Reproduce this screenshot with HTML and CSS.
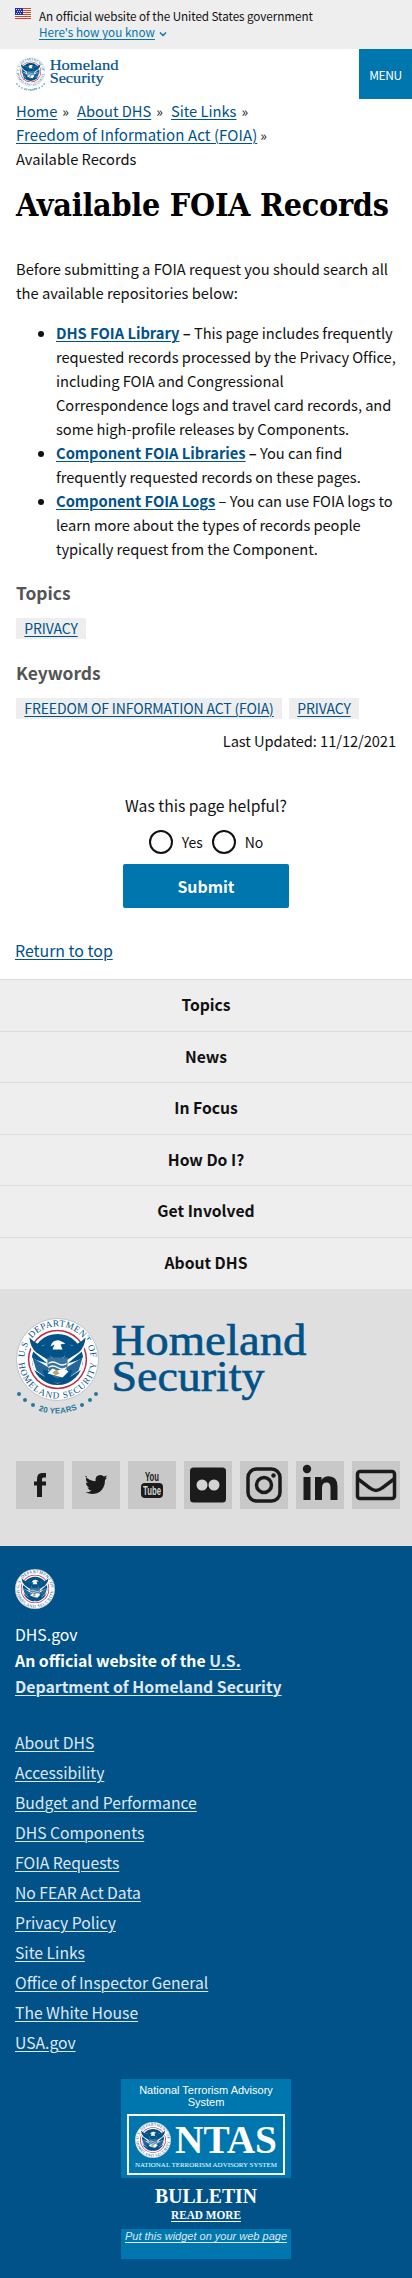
FILE: index.html
```
<!DOCTYPE html>
<html lang="en">
<head>
<meta charset="utf-8">
<meta name="viewport" content="width=device-width">
<title>Available FOIA Records | Homeland Security</title>
<link rel="stylesheet" href="styles.css">
</head>
<body>
<svg class="defs" aria-hidden="true">
  <defs>
    <symbol id="eagle" viewBox="0 0 60 60">
      <circle cx="30" cy="30" r="29.5" fill="#bd2b46"/>
      <circle cx="30" cy="30" r="28" fill="#fff"/>
      <circle cx="30" cy="30" r="25.500" fill="#005288"/>
      <path d="M0 7 Q4 13 12 16 L20 15 L23 27 L30 31 L37 27 L40 15 L48 16 Q56 13 60 7 Q59 19 52 24 L40 34 Q55 30 56 27 L54 40 L37 51 L30 54 L23 51 L6 40 L4 27 Q5 30 20 34 L8 24 Q1 19 0 7Z" fill="#fff"/>
      <path d="M2 8 Q9 15 16 16 L21 13 L23 27 Q26 31 30 31 Q34 31 37 27 L39 13 L44 16 Q51 15 58 8 Q57 18 51 23 L37 32 L23 32 L9 23 Q3 18 2 8Z" fill="#005288"/>
      <path d="M5 28 L21 38 L20 49 L9 41Z M55 28 L39 38 L40 49 L51 41Z" fill="#25659a"/>
      <path d="M15 40 L30 44 L45 40 L42 50 Q30 57 18 50Z" fill="#005288"/>
      <path d="M20 28 H40 V36 Q39 46 30 49 Q21 46 20 36Z" fill="#39749f"/>
      <path d="M21 34 Q25 31 30 34 T39 34 M21 38 Q25 35 30 38 T39 38" fill="none" stroke="#fff" stroke-width="1.3"/>
      <path d="M20 44 L25 39 L30 41 L36 39 L41 42 L35 48 L28 46Z" fill="#fff"/>
      <path d="M25 43 L29 40 L32 44 L28 46Z" fill="#b2ad62"/>
      <path d="M23 17 Q25 10 32 11 L38 14 L33 15 L35 20 H25 L27 15Z" fill="#fff"/>
    </symbol>
    <symbol id="seal" viewBox="0 0 84 84">
      <circle cx="42" cy="42" r="41.5" fill="#fff" stroke="#b9c3ca"/>
      <path id="arc-top" d="M8.500 42 A33.500 33.500 0 0 1 75.500 42" fill="none"/>
      <path id="arc-low" d="M2.500 42 A39.500 39.500 0 0 0 81.500 42" fill="none"/>
      <text class="seal-text"><textPath href="#arc-top" startOffset="50%" text-anchor="middle" textLength="101">U.S. DEPARTMENT OF</textPath></text>
      <text class="seal-text"><textPath href="#arc-low" startOffset="50%" text-anchor="middle" textLength="117">HOMELAND SECURITY</textPath></text>
      <use href="#eagle" x="11.500" y="11.500" width="61" height="61"/>
    </symbol>
    <symbol id="dhs-logo" viewBox="0 0 292 98">
      <use href="#seal" x="0" y="0" width="83" height="83"/>
      <g fill="#28789c"><circle cx="3" cy="76" r="2"/><circle cx="9" cy="82" r="2"/><circle cx="17" cy="87" r="2"/><circle cx="66" cy="87" r="2"/><circle cx="74" cy="82" r="2"/><circle cx="80" cy="76" r="2"/></g>
      <path id="arc-years" d="M21 92 Q42 100 64 90" fill="none"/>
      <text class="years"><textPath href="#arc-years" startOffset="3%" textLength="40">20 YEARS</textPath></text>
      <text class="wordmark" x="95.500" y="37" textLength="195" lengthAdjust="spacingAndGlyphs">Homeland</text>
      <text class="wordmark" x="95.500" y="73" textLength="153" lengthAdjust="spacingAndGlyphs">Security</text>
    </symbol>
  </defs>
</svg>

<section class="banner">
  <svg class="flag" viewBox="0 0 16 11"><path fill="#fff" d="M0 0h16v11H0z"/><path fill="#db3e1f" d="M0 0h16v1H0zM0 2h16v1H0zM0 4h16v1H0zM0 6h16v1H0zM0 8h16v1H0zM0 10h16v1H0z"/><path fill="#1e33b1" d="M0 0h8v7H0z"/><path stroke="#fff" stroke-width=".8" stroke-dasharray="1 1" d="M1 1.500h6M2 3.500h6M1 5.500h6"/></svg>
  <div><p class="official">An official website of the United States government</p>
  <p class="know"><a href="#">Here's how you know</a><svg class="chevron" viewBox="0 0 8 6"><path d="M1 1.500 4 4.500 7 1.500" fill="none" stroke="#0076ae" stroke-width="1.500"/></svg></p></div>
</section>

<header class="header">
  <svg class="brand"><use href="#dhs-logo"/></svg>
  <button class="menu">MENU</button>
</header>

<main class="main">
  <nav class="crumbs">
    <div><a href="#">Home</a><i>»</i><a href="#">About DHS</a><i>»</i><a href="#">Site Links</a><i>»</i></div>
    <div><a href="#" class="c-foia">Freedom of Information Act (FOIA)</a><i>»</i></div>
    <div>Available Records</div>
  </nav>
  <h1>Available FOIA Records</h1>
  <p class="intro">Before submitting a FOIA request you should search all<br>the available repositories below:</p>
  <ul class="repos">
    <li><a href="#">DHS FOIA Library</a> <b>–</b> This page includes frequently<br>requested records processed by the Privacy Office,<br>including FOIA and Congressional<br>Correspondence logs and travel card records, and<br>some high-profile releases by Components.</li>
    <li><a href="#">Component FOIA Libraries</a> <b>–</b> You can find<br>frequently requested records on these pages.</li>
    <li><a href="#">Component FOIA Logs</a> – You can use FOIA logs to<br>learn more about the types of records people<br>typically request from the Component.</li>
  </ul>
  <h2>Topics</h2>
  <div class="tags"><a href="#" class="w70">PRIVACY</a></div>
  <h2 class="second">Keywords</h2>
  <div class="tags"><a href="#" class="w266">FREEDOM OF INFORMATION ACT (FOIA)</a><a href="#" class="w70">PRIVACY</a></div>
  <p class="updated">Last Updated: 11/12/2021</p>
  <form class="survey">
    <p>Was this page helpful?</p>
    <div class="choices"><label><span class="radio"></span>Yes</label><label><span class="radio"></span>No</label></div>
    <button type="button">Submit</button>
  </form>
  <p class="return"><a href="#">Return to top</a></p>
</main>

<footer>
  <nav class="foot-nav"><a href="#">Topics</a><a href="#">News</a><a href="#">In Focus</a><a href="#">How Do I?</a><a href="#">Get Involved</a><a href="#">About DHS</a></nav>
  <section class="agency">
    <svg class="agency-logo"><use href="#dhs-logo"/></svg>
    <div class="social">
      <a href="#"><svg viewBox="0 0 48 48"><path d="M30 12v4.500h-2.500q-1.500 0-1.500 1.500V20.500H30v4h-4V36h-5V24.500h-3v-4h3V18q0-6 5-6z"/></svg></a>
      <a href="#"><svg viewBox="0 0 48 48"><path d="M13 15q4 5 10.500 5.300Q23 14 28.500 14q2 0 3.400 1.500L35 14.600l-1.500 2.500 1.500-.3-2 2.300Q33 27 27.500 31q-6 3.500-14 .5 4 0 6-2-3-.5-4-3h2q-3.500-1.500-3.500-5l2 .5q-3.500-3-1-7z"/></svg></a>
      <a href="#"><svg viewBox="0 0 48 48"><rect x="13" y="22" width="22" height="15" rx="4"/><text class="yt" x="17" y="20" textLength="14" lengthAdjust="spacingAndGlyphs">You</text><text class="yt light" x="15" y="34" textLength="18" lengthAdjust="spacingAndGlyphs">Tube</text></svg></a>
      <a href="#"><svg viewBox="0 0 48 48"><rect x="6" y="6.500" width="36" height="35" rx="3.500"/><circle class="light" cx="18" cy="24" r="5.500"/><circle class="light" cx="30" cy="24" r="5.500"/></svg></a>
      <a href="#"><svg viewBox="0 0 48 48"><g class="stroke"><rect x="8" y="8" width="32" height="32" rx="8.500"/><circle cx="24" cy="24" r="7.500"/></g><circle cx="33.500" cy="14.500" r="2.200"/></svg></a>
      <a href="#"><svg viewBox="0 0 48 48"><circle cx="11" cy="8" r="4.200"/><path d="M7.500 16h7v23h-7zM19 16h6.500v3q2.500-3.700 7-3.700 9 0 9 10.200V39h-7V26.500q0-5-4-5-4.500 0-4.500 5.500v12h-7z"/></svg></a>
      <a href="#"><svg viewBox="0 0 48 48"><g class="stroke"><rect x="5.500" y="10.500" width="37" height="27" rx="2.500"/><path d="M6 18 18 27q6 5 12 0l12-9"/></g></svg></a>
    </div>
  </section>
  <section class="identifier">
    <svg class="small-seal"><use href="#seal"/></svg>
    <p class="domain">DHS.gov</p>
    <p class="official-site">An official website of the <a href="#">U.S.<br>Department of Homeland Security</a></p>
    <ul class="links"><li><a href="#">About DHS</a></li><li><a href="#">Accessibility</a></li><li><a href="#">Budget and Performance</a></li><li><a href="#">DHS Components</a></li><li><a href="#">FOIA Requests</a></li><li><a href="#">No FEAR Act Data</a></li><li><a href="#">Privacy Policy</a></li><li><a href="#">Site Links</a></li><li><a href="#">Office of Inspector General</a></li><li><a href="#">The White House</a></li><li><a href="#">USA.gov</a></li></ul>
    <aside class="ntas">
      <div class="ntas-top"><p>National Terrorism Advisory<br>System</p>
        <svg class="ntas-box" viewBox="0 0 158 61"><rect x="1" y="1" width="156" height="59" fill="none" stroke="#fff" stroke-width="2"/><use href="#seal" x="8" y="8" width="36" height="36"/><text class="ntas-name" x="48" y="39" textLength="102" lengthAdjust="spacingAndGlyphs">NTAS</text><text class="ntas-sub" x="8" y="52.500" textLength="142" lengthAdjust="spacingAndGlyphs">NATIONAL TERRORISM ADVISORY SYSTEM</text></svg>
      </div>
      <svg class="bulletin" viewBox="0 0 170 51"><text class="b1" x="34" y="25" textLength="102" lengthAdjust="spacingAndGlyphs">BULLETIN</text><text class="b2" x="50" y="41" textLength="70" lengthAdjust="spacingAndGlyphs">READ MORE</text><path d="M50 43.500h70" stroke="#fff"/></svg>
      <p class="put"><a href="#">Put this widget on your web page</a></p>
    </aside>
  </section>
</footer>
</body>
</html>
```
FILE: styles.css
```
* { box-sizing: border-box; }
body, p, h1, h2, ul { margin: 0; padding: 0; }
body { width: 412px; background: #fff; color: #111; font-family: "Noto Sans CJK SC", sans-serif; font-size: 14.7px; line-height: 24px; white-space: nowrap; }
a { color: #005288; text-decoration: underline; text-underline-offset: 2px; text-decoration-thickness: 1px; }
svg { display: block; }
button { border: 0; font-family: inherit; color: #fff; background: #0076ae; padding: 0; }
.defs { position: absolute; width: 0; height: 0; }
.banner { height: 49px; background: #eee; padding: 8px 15px; display: flex; gap: 8px; font-size: 11.7px; line-height: 16px; }
.official { letter-spacing: -.07px; }
.flag { width: 16px; height: 11px; }
.know { display: flex; align-items: center; gap: 4px; }
.know a { color: #0076ae; }
.chevron { width: 8px; height: 6px; margin-top: 3px; }
.header { height: 50px; padding-left: 16px; display: flex; justify-content: space-between; }
.brand { width: 103px; height: 35px; margin-top: 8px; }
.menu { width: 53px; height: 50px; font-size: 12px; letter-spacing: -.4px; }
.main { padding: 0 16px; height: 880px; }
.crumbs div { height: 24px; display: flex; }
.crumbs i { font-style: normal; font-size: 14px; margin: 0 8px 0 5px; }
.crumbs .c-foia { font-size: 15px; letter-spacing: .09px; }
.crumbs .c-foia + i { margin-left: 3px; }
h1 { font: bold 32px/40px "DejaVu Serif Condensed", "DejaVu Serif", serif; font-stretch: condensed; color: #000; margin-top: 14px; letter-spacing: -.25px; }
.intro { margin-top: 32px; }
.repos { margin-top: 16px; padding-left: 40px; letter-spacing: -.06px; }
.repos a { font-weight: bold; letter-spacing: 0; }
h2 { font-size: 17.4px; line-height: 24px; color: #545454; margin-top: 20px; }
.tags { display: flex; gap: 7px; margin-top: 13px; }
.tags a { height: 21px; background: #eee; text-align: center; line-height: 21px; font-size: 14px; letter-spacing: -.13px; }
.w70 { width: 70px; }
.w266 { width: 266px; }
h2.second { margin-top: 22px; }
.updated { text-align: right; margin-top: 10px; letter-spacing: -.08px; }
.survey { text-align: center; margin-top: 41px; display: flex; flex-direction: column; align-items: center; }
.survey p { font-size: 15.700px; }
.choices { display: flex; gap: 9px; height: 24px; margin-top: 12px; font-size: 14px; }
.choices label { display: flex; gap: 9px; }
.radio { width: 24px; height: 24px; border: 2px solid #111; border-radius: 50%; }
.survey button { width: 166px; height: 44px; border-radius: 2px; margin-top: 10px; font-size: 15.900px; font-weight: bold; }
.return { margin-top: 31px; font-size: 15.900px; margin-left: -1px; }
.foot-nav { height: 311px; background: #dfdfdf; }
.foot-nav a { display: block; height: 51.600px; border-top: 1px solid #dcdcdc; background: #eee; color: #111; font-size: 15.700px; font-weight: bold; text-decoration: none; text-align: center; line-height: 50px; }
.agency { height: 256px; background: #dfdfdf; padding: 28px 16px 0; }
.agency-logo { width: 292px; height: 98px; }
.social { display: flex; gap: 8px; margin-top: 45px; }
.social a { flex: none; width: 48px; height: 48px; background: #c8c8c8; }
.social svg { width: 48px; height: 48px; fill: #1b1b1b; }
.social .stroke { fill: none; stroke: #1b1b1b; stroke-width: 3.500px; }
.social .light { fill: #d3d3d3; }
.yt { font: bold 12px "Liberation Sans", sans-serif; }
.seal-text { font: 9.300px "Liberation Serif", serif; fill: #005288; }
.years { font: bold 8px "Liberation Sans", sans-serif; fill: #28789c; }
.wordmark { font: 43.500px "Liberation Serif", serif; fill: #005288; stroke: #005288; stroke-width: .6px; }
.identifier { height: 732px; background: #005288; color: #fff; padding: 23px 15px 0; font-size: 15.800px; }
.identifier a { color: #dfe7f0; }
.small-seal { width: 40px; height: 40px; }
.domain { line-height: 26px; margin-top: 13px; }
.official-site { line-height: 26px; font-weight: bold; }
.links { list-style: none; margin-top: 28px; font-size: 15.700px; }
.links li { height: 30px; line-height: 30px; }
.ntas { width: 170px; margin: 21px 0 0 106px; font-family: "Liberation Sans", sans-serif; }
.ntas-top { height: 99px; background: #0076ae; text-align: center; padding-top: 5px; font-size: 11px; line-height: 12px; }
.ntas-box { width: 158px; height: 61px; margin: 6px auto 0; }
.ntas text { font-family: "Liberation Serif", serif; fill: #fff; }
.ntas .ntas-name { font-size: 41px; font-weight: bold; }
.ntas .ntas-sub { font-size: 7px; }
.bulletin { width: 170px; height: 51px; }
.ntas .b1 { font-size: 22px; font-weight: bold; }
.ntas .b2 { font-size: 13px; font-weight: bold; }
.put { height: 30px; background: #0076ae; font-size: 11px; line-height: 15px; text-align: center; font-style: italic; }
```
